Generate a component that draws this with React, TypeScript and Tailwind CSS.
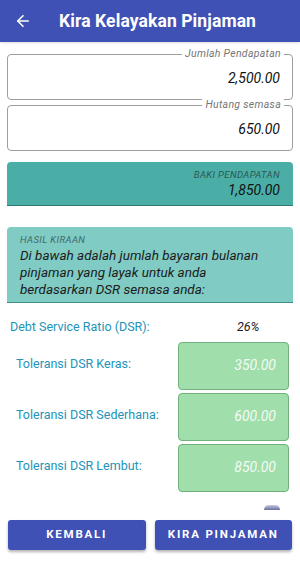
import { ArrowLeft } from "lucide-react";

const font = { fontFamily: "Roboto, 'Noto Sans', sans-serif" };

function Outlined({ label, value }: { label: string; value: string }) {
  return (
    <div className="relative h-[46px] rounded-[4px] border border-[#9e9e9e] bg-white">
      <span className="absolute -top-[7px] right-[8px] bg-white px-[3px] text-[10.5px] italic leading-[12px] tracking-[0.3px] text-[#757575]">
        {label}
      </span>
      <div className="flex h-full items-center justify-end pr-[12px] pt-[2px] text-[14px] italic text-[#111]">
        {value}
      </div>
    </div>
  );
}

function Tolerance({ label, value }: { label: string; value: string }) {
  return (
    <div className="flex items-center justify-between">
      <span className="-mt-[2px] pl-[9px] text-[12.5px] text-[#2393b8]">{label}</span>
      <div className="flex h-[48px] w-[111px] items-center justify-end rounded-[4px] border border-[#6fb27c] bg-[#a0deab] pr-[12px] text-[14px] italic text-[#f4fbf5]">
        {value}
      </div>
    </div>
  );
}

export default function App() {
  return (
    <div className="flex h-[566px] w-[300px] flex-col overflow-hidden bg-white" style={font}>
      <header className="flex h-[42px] items-center bg-[#3f51b5] pl-[14px] text-white shadow">
        <ArrowLeft size={18} strokeWidth={2.2} />
        <h1 className="ml-[27px] text-[17.5px] font-bold tracking-[0.1px]">Kira Kelayakan Pinjaman</h1>
      </header>

      <div className="flex flex-col px-[7px] pt-[12px]">
        <div className="flex flex-col gap-[5px]">
          <Outlined label="Jumlah Pendapatan" value="2,500.00" />
          <Outlined label="Hutang semasa" value="650.00" />
        </div>

        <div className="mt-[11px] flex h-[44px] flex-col items-end justify-center rounded-t-[4px] border-b border-[#2f7d76] bg-[#4aaea6] pr-[13px]">
          <span className="text-[9.5px] italic leading-[12px] tracking-[0.4px] text-[#2d5753]">BAKI PENDAPATAN</span>
          <span className="text-[14px] italic leading-[18px] text-[#111]">1,850.00</span>
        </div>

        <div className="mt-[21px] flex h-[76px] flex-col rounded-t-[4px] border-b border-[#3f8f88] bg-[#80cbc4] pl-[13px] pt-[7px]">
          <span className="text-[9.5px] italic leading-[12px] tracking-[0.4px] text-[#3d6a66]">HASIL KIRAAN</span>
          <p className="mt-[1px] w-[242px] text-[13.5px] italic leading-[17px] text-[#1b1b1b]">
            Di bawah adalah jumlah bayaran bulanan pinjaman yang layak untuk anda berdasarkan DSR semasa anda:
          </p>
        </div>

        <div className="mt-[15px] flex items-center">
          <span className="w-[230px] pl-[3px] text-[12.5px] text-[#2393b8]">Debt Service Ratio (DSR):</span>
          <span className="text-[12.5px] italic text-[#222]">26%</span>
        </div>

        <div className="mt-[5px] flex flex-col gap-[3px] pr-[4px]">
          <Tolerance label="Toleransi DSR Keras:" value="350.00" />
          <Tolerance label="Toleransi DSR Sederhana:" value="600.00" />
          <Tolerance label="Toleransi DSR Lembut:" value="850.00" />
        </div>

        <div className="mt-[13px] flex justify-end pr-[13px]">
          <div className="h-[5px] w-[16px] rounded-t-full bg-gradient-to-b from-[#c8cae0] to-[#6a6fa0]" />
        </div>

        <div className="mt-[10px] flex gap-[9px] px-[1px]">
          <button className="h-[30px] flex-1 rounded-[3px] bg-[#3f51b5] text-[11.5px] font-bold tracking-[1.8px] text-white shadow-[0_2px_3px_rgba(0,0,0,0.3)]">
            KEMBALI
          </button>
          <button className="h-[30px] flex-1 rounded-[3px] bg-[#3f51b5] text-[11.5px] font-bold tracking-[1.8px] text-white shadow-[0_2px_3px_rgba(0,0,0,0.3)]">
            KIRA PINJAMAN
          </button>
        </div>
      </div>
    </div>
  );
}
